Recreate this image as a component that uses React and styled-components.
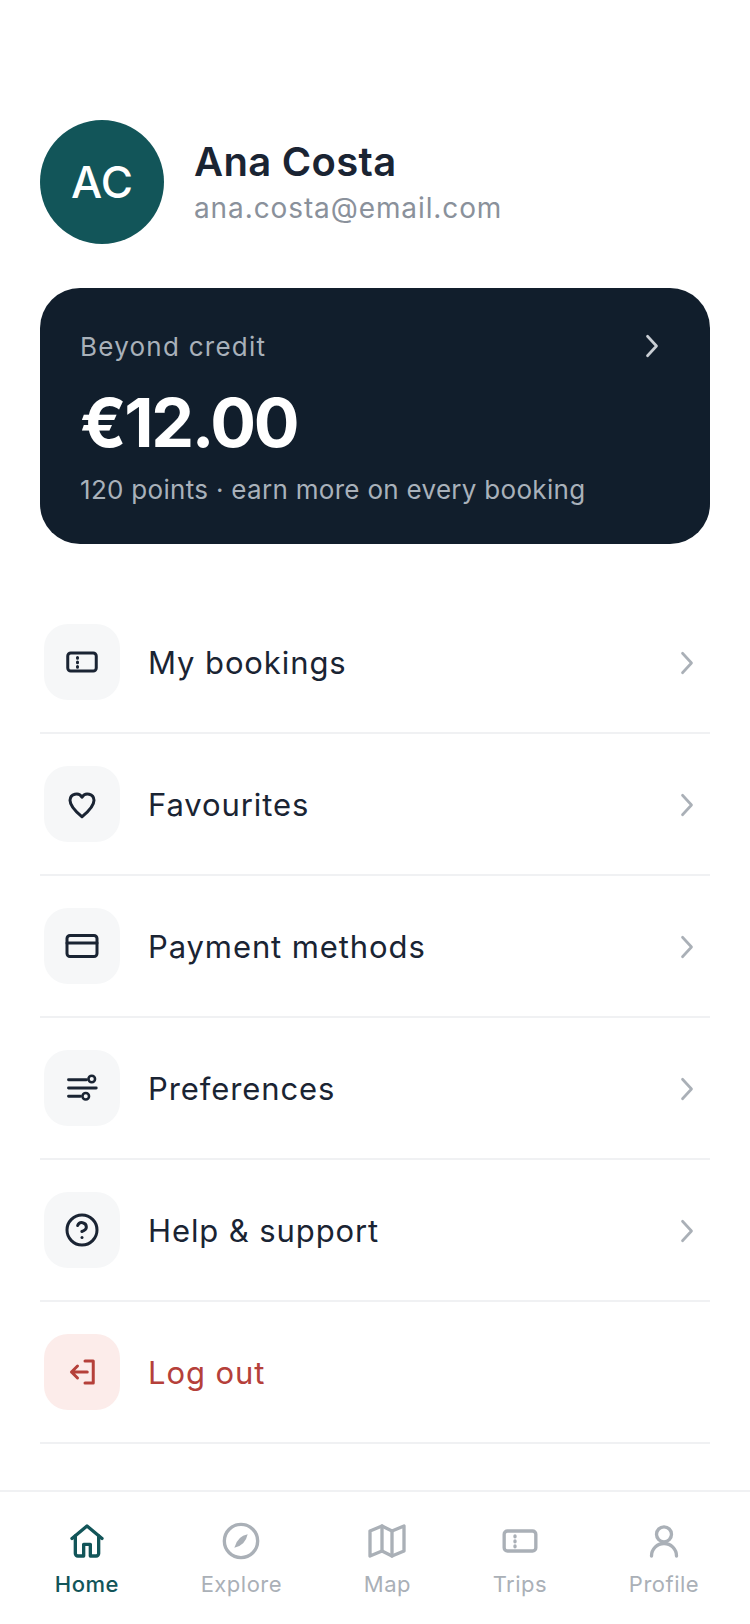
import React from 'react';
import styled, { createGlobalStyle } from 'styled-components';

const GlobalStyle = createGlobalStyle`
    html, body {
        margin: 0;
        padding: 0;
        background: #fff;
    }
    body {
        font-family: Inter, "Liberation Sans", sans-serif;
    }
`;

const Page = styled.div`
    width: 750px;
    height: 1624px;
    display: flex;
    flex-direction: column;
    overflow: hidden;
`;

const Content = styled.div`
    flex: 1;
    padding: 120px 40px 0;
`;

const Header = styled.div`
    display: flex;
    align-items: center;
    gap: 30px;
`;

const Avatar = styled.div`
    width: 124px;
    height: 124px;
    border-radius: 50%;
    background: #125559;
    color: #fff;
    font-size: 44px;
    font-weight: 500;
    display: flex;
    align-items: center;
    justify-content: center;
`;

const Name = styled.div`
    color: #1a2433;
    font-size: 40px;
    line-height: 48px;
    font-weight: 600;
    letter-spacing: 0.3px;
`;

const Email = styled.div`
    color: #8a919b;
    font-size: 28px;
    line-height: 36px;
    margin-top: 4px;
    letter-spacing: 0.9px;
`;

const CreditCard = styled.div`
    margin-top: 44px;
    height: 256px;
    box-sizing: border-box;
    padding: 40px 40px 0;
    border-radius: 40px;
    background: #111e2c;
    display: flex;
    flex-direction: column;
`;

const CreditTop = styled.div`
    display: flex;
    align-items: center;
    justify-content: space-between;
    color: #c9ced4;
    height: 36px;
`;

const CreditLabel = styled.div`
    color: #a9b1ba;
    font-size: 26px;
    letter-spacing: 1.25px;
`;

const Amount = styled.div`
    color: #fff;
    font-size: 68px;
    line-height: 84px;
    font-weight: 700;
    letter-spacing: -2.3px;
    margin-top: 16px;
`;

const CreditNote = styled.div`
    color: #a9b1ba;
    font-size: 26px;
    letter-spacing: 0.3px;
    margin-top: 10px;
`;

const Menu = styled.div`
    margin-top: 48px;
`;

const Row = styled.div`
    height: 142px;
    box-sizing: border-box;
    padding: 0 5px 0 4px;
    display: flex;
    align-items: center;
    border-bottom: 2px solid #f0f1f3;
`;

const Tile = styled.div`
    width: 76px;
    height: 76px;
    border-radius: 24px;
    background: ${(p) => (p.$danger ? '#fcecea' : '#f6f7f8')};
    color: ${(p) => (p.$danger ? '#b5403a' : '#1a2433')};
    display: flex;
    align-items: center;
    justify-content: center;
`;

const Label = styled.div`
    flex: 1;
    margin-left: 28px;
    color: ${(p) => (p.$danger ? '#b5403a' : '#1a2433')};
    font-size: 31px;
    font-weight: 400;
    letter-spacing: 0.9px;
`;

const RowArrow = styled.div`
    color: #aab0b7;
    display: flex;
    margin-top: 2px;
`;

const TabBar = styled.div`
    height: 134px;
    box-sizing: border-box;
    border-top: 2px solid #f0f1f3;
    padding: 0 10px 0 14px;
    display: flex;
    justify-content: space-around;
`;

const Tab = styled.div`
    padding-top: 29px;
    display: flex;
    flex-direction: column;
    align-items: center;
    color: ${(p) => (p.$active ? '#125559' : '#aab0b7')};
`;

const TabText = styled.div`
    font-size: 22px;
    line-height: 28px;
    font-weight: ${(p) => (p.$active ? 500 : 400)};
    letter-spacing: 0.5px;
    margin-top: 9px;
`;

function Icon({ size = 36, children }) {
    return (
        <svg
            width={size}
            height={size}
            viewBox="0 0 24 24"
            fill="none"
            stroke="currentColor"
            strokeWidth="2"
            strokeLinecap="round"
            strokeLinejoin="round"
        >
            {children}
        </svg>
    );
}

const Chevron = () => (
    <Icon>
        <path d="M9 5.500l6 6.500-6 6.500" strokeWidth="1.800" />
    </Icon>
);

const TicketIcon = ({ size }) => (
    <Icon size={size}>
        <rect x="2.500" y="6" width="19" height="12" rx="2" />
        <path d="M9 9v.5M9 12v.5M9 15v.5" />
    </Icon>
);

const icons = {
    ticket: <TicketIcon />,
    heart: (
        <Icon>
            <path d="M12 20.500C9 18 4 14 4 9.500A4.300 4.300 0 0 1 12 7.500 4.300 4.300 0 0 1 20 9.500C20 14 15 18 12 20.500z" />
        </Icon>
    ),
    card: (
        <Icon>
            <rect x="2" y="5" width="20" height="14" rx="2" />
            <path d="M2 10h20" />
        </Icon>
    ),
    sliders: (
        <Icon>
            <path d="M3 6.500h12M3 12h18.500M3 17.500h8" strokeWidth="1.900" />
            <circle cx="18.500" cy="6" r="2.200" strokeWidth="1.700" />
            <circle cx="14.500" cy="17.500" r="2.200" strokeWidth="1.700" />
        </Icon>
    ),
    help: (
        <Icon>
            <circle cx="12" cy="12" r="10" />
            <path d="M9.100 9a3 3 0 0 1 5.800 1c0 2-3 3-3 3" />
            <path d="M12 17h.01" />
        </Icon>
    ),
    logout: (
        <Icon>
            <path d="M14 4.700h5.500v14.600H14" />
            <path d="M15.500 12H5M9 8l-4 4 4 4" />
        </Icon>
    ),
};

const menuItems = [
    { icon: 'ticket', label: 'My bookings' },
    { icon: 'heart', label: 'Favourites' },
    { icon: 'card', label: 'Payment methods' },
    { icon: 'sliders', label: 'Preferences' },
    { icon: 'help', label: 'Help & support' },
    { icon: 'logout', label: 'Log out', danger: true },
];

const tabs = [
    {
        label: 'Home',
        active: true,
        icon: (
            <Icon size={40}>
                <path d="M3 10.500L12 3l9 7.500" />
                <path d="M5 9v10.500a1.500 1.500 0 0 0 1.500 1.500H10v-7h4v7h3.500a1.500 1.500 0 0 0 1.500-1.500V9" />
            </Icon>
        ),
    },
    {
        label: 'Explore',
        icon: (
            <Icon size={40}>
                <circle cx="12" cy="12" r="10" />
                <path d="M16 8Q10 9 8 16 14.500 15 16 8z" fill="currentColor" stroke="none" />
            </Icon>
        ),
    },
    {
        label: 'Map',
        icon: (
            <Icon size={40}>
                <path d="M1.800 6L9 3l6 3 7.200-3v15L15 21l-6-3-7.200 3z" />
                <path d="M9 3v15M15 6v15" />
            </Icon>
        ),
    },
    { label: 'Trips', icon: <TicketIcon size={40} /> },
    {
        label: 'Profile',
        icon: (
            <Icon size={40}>
                <circle cx="12" cy="8" r="4.500" />
                <path d="M4.500 21a7.500 7.500 0 0 1 15 0" />
            </Icon>
        ),
    },
];

function App() {
    return (
        <Page>
            <GlobalStyle />
            <Content>
                <Header>
                    <Avatar>AC</Avatar>
                    <div>
                        <Name>Ana Costa</Name>
                        <Email>ana.costa@email.com</Email>
                    </div>
                </Header>

                <CreditCard>
                    <CreditTop>
                        <CreditLabel>Beyond credit</CreditLabel>
                        <Chevron />
                    </CreditTop>
                    <Amount>€12.00</Amount>
                    <CreditNote>120 points · earn more on every booking</CreditNote>
                </CreditCard>

                <Menu>
                    {menuItems.map((item) => (
                        <Row key={item.label}>
                            <Tile $danger={item.danger}>{icons[item.icon]}</Tile>
                            <Label $danger={item.danger}>{item.label}</Label>
                            {!item.danger && (
                                <RowArrow>
                                    <Chevron />
                                </RowArrow>
                            )}
                        </Row>
                    ))}
                </Menu>
            </Content>

            <TabBar>
                {tabs.map((tab) => (
                    <Tab key={tab.label} $active={tab.active}>
                        {tab.icon}
                        <TabText $active={tab.active}>{tab.label}</TabText>
                    </Tab>
                ))}
            </TabBar>
        </Page>
    );
}

export default App;
